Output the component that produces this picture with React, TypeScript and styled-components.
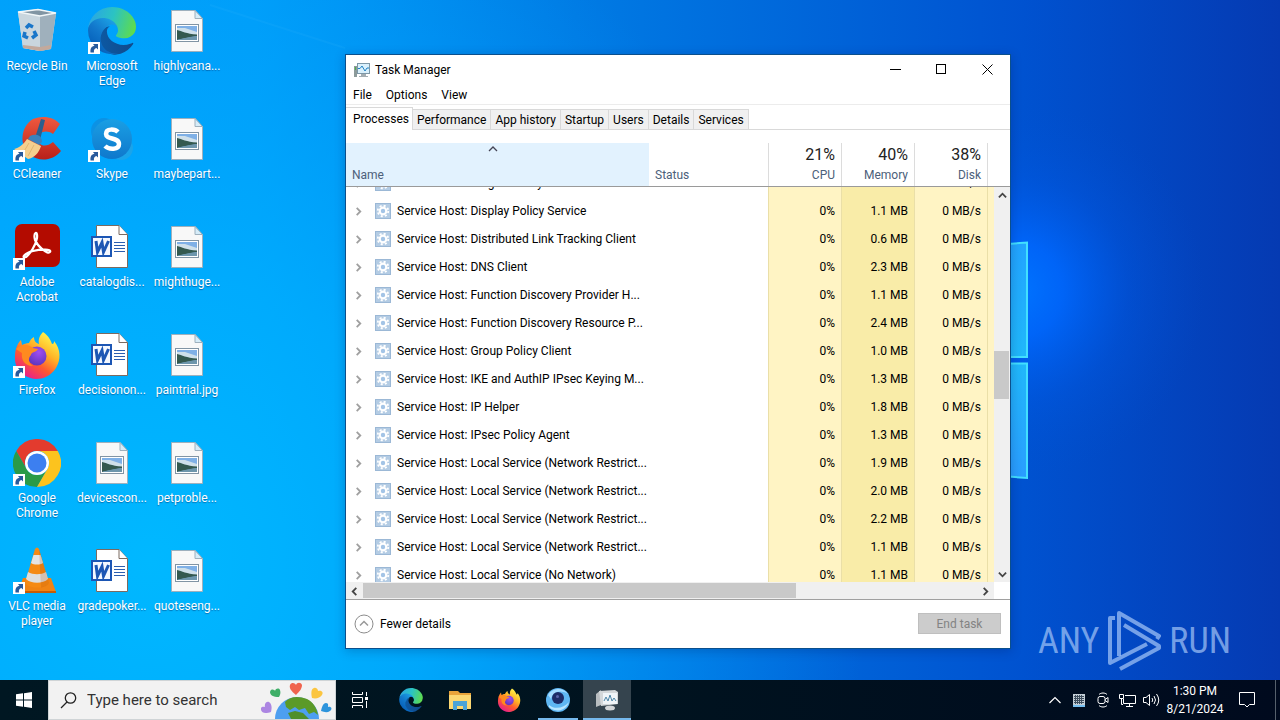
import React from 'react';
import styled, { createGlobalStyle, css } from 'styled-components';

const UI_FONT = "'Segoe UI', Roboto, 'Open Sans', sans-serif";

const GlobalStyle = createGlobalStyle`
  *, *::before, *::after { box-sizing: border-box; }
  body { margin: 0; font-family: ${UI_FONT}; font-size: 12px; }
  button, input { font: inherit; color: inherit; }
  button { margin: 0; padding: 0; border: 0; background: none; }
`;

/* ---------- Desktop ---------- */

const Screen = styled.div`
  display: flex;
  flex-direction: column;
  min-height: 100vh;
  background: #0078d7;
`;

const Desktop = styled.main`
  position: relative;
  flex: 1;
  overflow: hidden;
`;

const WallpaperSvg = styled.svg`
  position: absolute;
  inset: 0;
  width: 100%;
  height: 100%;
`;

const IconGrid = styled.div`
  position: relative;
  display: grid;
  grid-auto-flow: column;
  grid-template-rows: repeat(6, 108px);
  grid-auto-columns: 75px;
  justify-content: start;
  padding-top: 7px;
`;

const Shortcut = styled.button`
  display: flex;
  flex-direction: column;
  align-items: center;
  gap: 4px;
  padding-right: 1px;
  color: #fff;
  line-height: 15px;
  text-shadow: 0 1px 1px rgba(0, 50, 110, 0.5);
  svg { flex: none; }
  span { max-width: 72px; }
`;

/* ---------- Window ---------- */

const Window = styled.section`
  position: absolute;
  top: 54px;
  left: 345px;
  right: 269px;
  border: 1px solid #0b4f8c;
  background: #fff;
  color: #000;
  box-shadow: 0 2px 10px rgba(0, 20, 80, 0.25);
`;

const TitleBar = styled.header`
  display: flex;
  align-items: center;
  height: 30px;
  padding-left: 8px;
  h1 { flex: 1; margin: 0 0 0 5px; font-size: 12px; font-weight: 400; }
`;

const CaptionButton = styled.button`
  display: grid;
  place-items: center;
  width: 46px;
  height: 30px;
  padding-bottom: 1px;
`;

const MenuBar = styled.nav`
  display: flex;
  gap: 14px;
  height: 20px;
  padding: 0 7px;
  border-bottom: 1px solid #ececec;
  button { line-height: 20px; }
`;

const TabStrip = styled.div`
  display: flex;
  align-items: flex-end;
  height: 25px;
  border-bottom: 1px solid #d9d9d9;
`;

const Tab = styled.button<{ $selected?: boolean }>`
  height: 20px;
  padding: 1px 4px 0;
  border: 1px solid #d9d9d9;
  border-left-width: 0;
  border-bottom: 0;
  background: #f0f0f0;
  line-height: 18px;
  ${(p) => p.$selected && css`
    height: 23px;
    margin-bottom: -1px;
    padding: 0 3px 1px 7px;
    background: #fff;
    line-height: 20px;
  `}
`;

/* ---------- Process table ---------- */

const TableArea = styled.div`
  position: relative;
  padding-top: 13px;
`;

const ProcessTable = styled.table`
  display: block;
  thead { display: block; border-bottom: 1px solid #9a9a9a; }
  tbody { display: block; height: 395px; overflow: hidden; }
`;

const rowGrid = css`
  display: grid;
  grid-template-columns: 303px minmax(0, 1fr) 73px 73px 73px 23px;
`;

const HeadRow = styled.tr`
  ${rowGrid}
`;

const HeadCell = styled.th<{ $metric?: boolean; $sorted?: boolean }>`
  position: relative;
  display: flex;
  flex-direction: column;
  justify-content: flex-end;
  height: 43px;
  padding: 0 6px 3px;
  border-left: ${(p) => (p.$metric ? '1px solid #dcdcdc' : '0')};
  background: ${(p) => (p.$sorted ? '#e2f2fe' : '#fff')};
  color: #4c607a;
  font-weight: 400;
  line-height: 16px;
  text-align: ${(p) => (p.$metric ? 'right' : 'left')};
  strong {
    color: #222;
    font-size: 16px;
    font-weight: 400;
    line-height: 24px;
  }
`;

const SortMark = styled.svg`
  position: absolute;
  top: 3px;
  left: 50%;
  margin-left: -10px;
`;

const BodyRow = styled.tr<{ $scrolled?: boolean }>`
  ${rowGrid}
  height: 28px;
  margin-top: ${(p) => (p.$scrolled ? '-18px' : '0')};
  line-height: 28px;
`;

const NameCell = styled.td`
  display: flex;
  align-items: center;
  gap: 6px;
  padding: 0 8px;
  white-space: nowrap;
  > button { display: grid; place-items: center; width: 9px; height: 16px; margin-right: 6px; }
  > svg { flex: none; }
`;

const Cell = styled.td<{ $tone?: 'light' | 'deep' }>`
  padding: 0 6px;
  text-align: right;
  ${(p) => p.$tone && css`
    border-left: 1px solid #eadfa8;
    background: ${p.$tone === 'deep' ? '#f9eca8' : '#fff4c4'};
  `}
`;

const EndCell = styled(Cell)`
  margin-right: 16px;
`;

const VerticalBar = styled.div`
  position: absolute;
  right: 0;
  bottom: 0;
  display: flex;
  flex-direction: column;
  width: 16px;
  height: 395px;
  background: #f0f0f0;
`;

const HorizontalBar = styled.div`
  display: flex;
  height: 17px;
  margin-right: 16px;
  padding: 1px 0;
  background: #f0f0f0;
`;

const ScrollArrow = styled.button`
  display: grid;
  place-items: center;
  width: 17px;
  height: 16px;
  flex: none;
`;

const Thumb = styled.div<{ $grow: number }>`
  flex: ${(p) => p.$grow};
  margin-right: 1px;
  background: #c9c9c9;
`;

const Track = styled.div<{ $grow: number }>`
  flex: ${(p) => p.$grow};
`;

const Footer = styled.footer`
  display: flex;
  align-items: center;
  justify-content: space-between;
  height: 49px;
  padding: 0 9px 1px 8px;
  border-top: 1px solid #a0a0a0;
`;

const FewerDetails = styled.button`
  display: flex;
  align-items: center;
  gap: 6px;
`;

const EndTask = styled.button`
  width: 83px;
  height: 21px;
  border: 1px solid #bfbfbf;
  background: #ccc;
  color: #838383;
`;

/* ---------- Watermark ---------- */

const Watermark = styled.div`
  position: absolute;
  right: 49px;
  bottom: 8px;
  display: flex;
  align-items: center;
  gap: 8px;
  color: rgba(166, 199, 248, 0.7);
  font-family: 'Roboto Condensed', 'Liberation Sans Narrow', Roboto, sans-serif;
  font-size: 36px;
  line-height: 62px;
`;

/* ---------- Taskbar ---------- */

const Taskbar = styled.footer`
  position: relative;
  display: flex;
  height: 40px;
  background: linear-gradient(90deg, #001722, #00131f 50%, #000a1e);
  color: #fff;
`;

const TaskButton = styled.button<{ $running?: boolean; $active?: boolean }>`
  position: relative;
  display: grid;
  place-items: center;
  width: 48px;
  height: 40px;
  background: ${(p) => (p.$active ? '#35444e' : 'transparent')};
  ${(p) => (p.$running || p.$active) && css`
    &::after {
      content: '';
      position: absolute;
      bottom: 0;
      left: ${p.$active ? 0 : 4}px;
      right: ${p.$active ? 0 : 4}px;
      height: 2px;
      background: #76b9ed;
    }
  `}
`;

const SearchBox = styled.label`
  display: flex;
  align-items: center;
  gap: 10px;
  width: 288px;
  padding-left: 11px;
  border: 1px solid #cfd4d6;
  background: #f2f2f2;
  color: #222;
  svg { flex: none; }
  input {
    flex: 1;
    min-width: 0;
    padding: 0;
    border: 0;
    outline: 0;
    background: none;
    font-size: 15px;
  }
  input::placeholder { color: #333; opacity: 1; }
`;

const Pinned = styled.div`
  display: flex;
  gap: 1px;
  margin-left: 3px;
`;

const Tray = styled.div`
  display: flex;
  align-items: center;
  margin-left: auto;
`;

const TrayButton = styled.button`
  display: grid;
  place-items: center;
  width: 24px;
  height: 40px;
`;

const Clock = styled.time`
  width: 64px;
  line-height: 18px;
  text-align: center;
`;

const Notifications = styled(TrayButton)`
  width: 40px;
`;

const ShowDesktop = styled.button`
  width: 5px;
  height: 40px;
  margin-left: 8px;
  border-left: 1px solid #56606c;
`;

/* ---------- Drawings ---------- */

const Wallpaper = () => (
  <WallpaperSvg viewBox="0 0 1280 680" preserveAspectRatio="none" aria-hidden="true">
    <defs>
      <linearGradient id="sky" x1="0" y1="0" x2="1" y2="0">
        <stop offset="0" stopColor="#00a0fa" />
        <stop offset=".2" stopColor="#009cf8" />
        <stop offset=".45" stopColor="#007be4" />
        <stop offset=".8" stopColor="#0052d0" />
        <stop offset="1" stopColor="#053ab2" />
      </linearGradient>
      <radialGradient id="left" cx="150" cy="560" r="720" gradientUnits="userSpaceOnUse">
        <stop offset="0" stopColor="#00b8ff" />
        <stop offset=".4" stopColor="#00b0ff" stopOpacity=".75" />
        <stop offset="1" stopColor="#00a0ff" stopOpacity="0" />
      </radialGradient>
      <radialGradient id="glow" cx="1015" cy="290" r="190" gradientUnits="userSpaceOnUse">
        <stop offset="0" stopColor="#0074ff" />
        <stop offset=".25" stopColor="#0068ff" stopOpacity=".85" />
        <stop offset=".6" stopColor="#005cec" stopOpacity=".3" />
        <stop offset="1" stopColor="#0050d0" stopOpacity="0" />
      </radialGradient>
      <linearGradient id="pane" x1="0" y1="0" x2="0" y2="1">
        <stop offset="0" stopColor="#22a4ff" />
        <stop offset=".5" stopColor="#20b8fa" />
        <stop offset="1" stopColor="#2a9dff" />
      </linearGradient>
    </defs>
    <rect width="1280" height="680" fill="url(#sky)" />
    <rect width="1280" height="680" fill="url(#left)" />
    <path d="M210 5 L345 48" stroke="#4ac0ff" strokeWidth="2" opacity=".1" />
    <rect width="1280" height="680" fill="url(#glow)" />
    <path d="M900 252 L1027 242.500 V357 H900Z M900 363.500 H1027 V478 L900 468Z" fill="url(#pane)" stroke="#42e0ff" strokeWidth="2" />
  </WallpaperSvg>
);

const ShortcutArrow = () => (
  <g>
    <rect x="0" y="35" width="12" height="12" fill="#fff" />
    <path d="M2.500 45.500 C2 41 4 39 6.500 39 L5 37 H10 V42.500 L8.500 41 C6.500 41.500 5.500 43 6 45.500Z" fill="#285a9c" />
  </g>
);

const RecycleBin = () => (
  <svg width="48" height="48" viewBox="0 0 48 48">
    <path d="M5 5 L25 2 L43 6 L38 42 L27 44 L10 41Z" fill="#d4dde3" />
    <path d="M5 5 L27 9 L27 44 L10 41Z" fill="#c9d6de" />
    <path d="M27 9 L43 6 L38 42 L27 44Z" fill="#9fb0bc" />
    <path d="M5 5 L25 2.500 L43 6 L27 9Z" fill="#8195a3" stroke="#f1f6f8" strokeWidth="1.500" />
    <path d="M10 38 L27 40 L38 38 V42 L27 44 L10 41Z" fill="#c3a99c" />
    <g fill="none" stroke="#1976c9" strokeWidth="3.500">
      <path d="M13 21 L16 18 L20 20" />
      <path d="M21 24 L23 28 L19 31" />
      <path d="M15 31 L11 29 L12 25" />
    </g>
  </svg>
);

const EdgeArt = ({ id }: { id: string }) => (
  <>
    <defs>
      <linearGradient id={`${id}a`} x1="60" y1="177" x2="241" y2="177" gradientUnits="userSpaceOnUse">
        <stop offset="0" stopColor="#0c59a4" />
        <stop offset="1" stopColor="#114a8b" />
      </linearGradient>
      <linearGradient id={`${id}b`} x1="150" y1="100" x2="40" y2="225" gradientUnits="userSpaceOnUse">
        <stop offset="0" stopColor="#1b9de2" />
        <stop offset=".5" stopColor="#1278cc" />
        <stop offset="1" stopColor="#0661ba" />
      </linearGradient>
      <linearGradient id={`${id}c`} x1="20" y1="60" x2="245" y2="130" gradientUnits="userSpaceOnUse">
        <stop offset="0" stopColor="#2aa9e0" />
        <stop offset=".45" stopColor="#2bc3c3" />
        <stop offset="1" stopColor="#5fdc4c" />
      </linearGradient>
    </defs>
    <path fill={`url(#${id}a)`} d="M235.680 195.460a93.730 93.730 0 0 1-10.540 4.710 101.870 101.870 0 0 1-35.900 6.460c-47.320 0-88.540-32.550-88.540-74.320A31.480 31.480 0 0 1 117.130 105c-42.800 1.800-53.800 46.400-53.800 72.530 0 73.880 68.090 81.370 82.760 81.370 7.910 0 19.840-2.300 27-4.560l1.310-.44a128.340 128.340 0 0 0 66.600-52.800 4 4 0 0 0-5.320-5.640Z" />
    <path fill={`url(#${id}b)`} d="M105.730 241.420a79.200 79.200 0 0 1-22.740-21.340 80.720 80.720 0 0 1 29.530-120.300c3.120-1.470 8.450-4.130 15.540-4a32.350 32.350 0 0 1 25.690 13 31.880 31.880 0 0 1 6.360 18.660c0-.21 24.460-79.600-80-79.600-43.900 0-80 41.660-80 78.210a130.150 130.150 0 0 0 12.110 56 128 128 0 0 0 156.380 67.110 75.550 75.550 0 0 1-62.780-8Z" />
    <path fill={`url(#${id}c)`} d="M152.330 148.860c-.81 1.050-3.300 2.500-3.300 5.660 0 2.610 1.700 5.120 4.720 7.230 14.380 10 41.490 8.680 41.560 8.680a59.560 59.560 0 0 0 30.270-8.350A61.380 61.380 0 0 0 256 109.180c.26-22.410-8-37.310-11.340-43.910C223.460 23.840 177.720 0 128 0A128 128 0 0 0 0 126.200c.48-36.540 36.800-66.050 80-66.050 3.500 0 23.460.34 42 10.070 16.340 8.580 24.900 18.940 30.850 29.210 6.180 10.670 7.280 24.150 7.280 29.520s-2.740 13.330-7.800 19.910Z" />
  </>
);

const EdgeIcon = () => (
  <svg width="48" height="48" viewBox="0 0 48 48">
    <g transform="scale(.1875 .184)"><EdgeArt id="edge-desk" /></g>
    <ShortcutArrow />
  </svg>
);

const CCleaner = () => (
  <svg width="48" height="48" viewBox="0 0 48 48">
    <defs>
      <linearGradient id="cc" x1="0" y1="0" x2="0" y2="1">
        <stop offset="0" stopColor="#f0593f" />
        <stop offset="1" stopColor="#b8201a" />
      </linearGradient>
    </defs>
    <path d="M47 9 L40 19 C33 14 25 17 25 24 C25 31 33 33 40 27 L48 36 C40 46 26 47 17 40 C6 31 7 12 20 4 C30 0 41 2 47 9Z" fill="url(#cc)" />
    <path d="M28 4 L32 5 L27 25 L22 23Z" fill="#2b5f8e" />
    <path d="M17 21 C23 18 29 20 29 27 L26 30 L15 24Z" fill="#3a82bd" />
    <path d="M14 24 L28 31 C26 38 21 43 15 44 L1 34 C6 33 11 29 14 24Z" fill="#f4cf8e" />
    <path d="M16 28 L10 38 M21 30 L15 41" stroke="#e2b671" strokeWidth="1" />
    <ShortcutArrow />
  </svg>
);

const Skype = () => (
  <svg width="48" height="48" viewBox="0 0 48 48">
    <defs>
      <linearGradient id="sk" x1="0" y1="0" x2="0" y2="1">
        <stop offset="0" stopColor="#1a9fe4" />
        <stop offset="1" stopColor="#0f78cc" />
      </linearGradient>
    </defs>
    <circle cx="16" cy="16" r="13" fill="#0c92e4" />
    <circle cx="33" cy="33" r="12" fill="#1aa4ea" />
    <circle cx="24" cy="24" r="20" fill="url(#sk)" />
    <path d="M30 17 C27 14 18 13 18 19 C18 25 31 22 31 29 C31 35 21 35 17 31" fill="none" stroke="#fff" strokeWidth="4.500" />
    <ShortcutArrow />
  </svg>
);

const Acrobat = () => (
  <svg width="48" height="48" viewBox="0 0 48 48">
    <rect x="2" y="1" width="45" height="43" rx="7" fill="#b30b00" />
    <path d="M13 34 C8 36 11 30 20 28 C28 26 39 26 37 29 C35 32 25 24 22 17 C20 9 25 7 24 15 C23 22 17 31 13 34Z" fill="none" stroke="#fff" strokeWidth="2.200" />
    <ShortcutArrow />
  </svg>
);

const FirefoxArt = ({ id }: { id: string }) => (
  <>
    <defs>
      <linearGradient id={`${id}a`} x1=".8" y1=".1" x2=".25" y2=".95">
        <stop offset="0" stopColor="#fff04a" />
        <stop offset=".35" stopColor="#ffb326" />
        <stop offset=".65" stopColor="#ff5a2f" />
        <stop offset="1" stopColor="#e8208a" />
      </linearGradient>
      <radialGradient id={`${id}b`} cx=".6" cy=".3" r=".8">
        <stop offset="0" stopColor="#a24df0" />
        <stop offset="1" stopColor="#5433b8" />
      </radialGradient>
    </defs>
    <path d="M30 1 C36 5 38 10 39 13 C41 13 41 11 41 10 C48 18 48 29 43 37 C38 45 30 48 23 48 C10 47 1 38 2 25 C2 19 4 13 8 9 L9 14 C11 13 13 12 16 12 C17 9 19 7 21 6 C21 10 23 12 26 13 C25 8 27 4 30 1Z" fill={`url(#${id}a)`} />
    <circle cx="24" cy="25" r="9.500" fill={`url(#${id}b)`} />
    <path d="M3 18 C8 13 15 13 20 17 L25 18 C24 21 18 21 18 24 C15 27 15 32 20 35 C11 35 8 28 9 22Z" fill="#ff8a1f" />
  </>
);

const FirefoxIcon = () => (
  <svg width="48" height="48" viewBox="0 0 48 48">
    <FirefoxArt id="fx-desk" />
    <ShortcutArrow />
  </svg>
);

const ChromeIcon = () => (
  <svg width="48" height="48" viewBox="0 0 48 48">
    <path d="M3.200 12 A24 24 0 0 1 44.800 12 H24 A12 12 0 0 0 13.600 30Z" fill="#e33b2e" />
    <path d="M3.200 12 A24 24 0 0 0 24 48 L34.400 30 A12 12 0 0 1 13.600 30Z" fill="#2a9a47" />
    <path d="M44.800 12 A24 24 0 0 1 24 48 L34.400 30 A12 12 0 0 0 24 12Z" fill="#fcc31e" />
    <circle cx="24" cy="24" r="12" fill="#fff" />
    <circle cx="24" cy="24" r="9.500" fill="#3c7ff0" />
    <ShortcutArrow />
  </svg>
);

const VlcIcon = () => (
  <svg width="48" height="48" viewBox="0 0 48 48">
    <path d="M10 31 H38 L43 45 H5Z" fill="#f08313" />
    <path d="M5 44 H43 V46 H5Z" fill="#c55c05" />
    <path d="M22 2 Q24 -1 26 2 L36 36 C32 42 16 42 12 36Z" fill="#f58a14" />
    <path d="M20.500 8 H27.500 L30 16 C27 18 21 18 18 16Z" fill="#e4e4e4" />
    <path d="M15 25 C20 28 28 28 33 25 L35 32 C30 37 18 37 13 32Z" fill="#dedede" />
    <path d="M26 2 L36 36 C34 39 31 40 28 40.500Z" fill="#a84400" opacity=".2" />
    <ShortcutArrow />
  </svg>
);

const ImageFile = () => (
  <svg width="48" height="48" viewBox="0 0 48 48">
    <path d="M8.500 3.500 H32 L39.500 11.500 V44.500 H8.500Z" fill="#f8f8f8" stroke="#9eb0bd" />
    <path d="M32 3.500 V11.500 H39.500Z" fill="#d6ecf8" stroke="#9eb0bd" />
    <rect x="12.500" y="17.500" width="23" height="17" fill="#fff" stroke="#8194a4" />
    <rect x="14" y="19" width="20" height="14" fill="#7fb0e6" />
    <path d="M14 21 H22 L34 25 V28 H14Z" fill="#cfe0ea" />
    <path d="M14 23 C19 24 23 27 34 27.500 V29 C26 30 20 32 14 33Z" fill="#34594f" />
    <path d="M34 29 C26 30 20 31 14 33 H34Z" fill="#6d96ac" />
  </svg>
);

const WordFile = () => (
  <svg width="48" height="48" viewBox="0 0 48 48">
    <path d="M8.500 2.500 H31 L39.500 11.500 V44.500 H8.500Z" fill="#fff" stroke="#7b6a60" />
    <path d="M31 2.500 V11.500 H39.500" fill="#fff" stroke="#7b6a60" />
    <path d="M26 19.500 H37 M26 22.500 H37 M26 25.500 H37 M26 28.500 H37" stroke="#2b5eb0" />
    <rect x="3" y="13" width="21" height="21" fill="#1c56b4" />
    <rect x="5" y="15" width="17" height="17" fill="#f4f8ff" />
    <path d="M8 18 L9.500 29 L14 19.500 L15.500 29 L20.500 18" fill="none" stroke="#1c56b4" strokeWidth="3" />
  </svg>
);

const GearTile = () => (
  <svg width="16" height="16" viewBox="0 0 16 16">
    <rect width="16" height="16" fill="#b4cce4" />
    <rect x=".5" y=".5" width="15" height="15" fill="none" stroke="#9bb8d6" />
    <circle cx="8" cy="8" r="5.300" fill="none" stroke="#fff" strokeWidth="1.800" strokeDasharray="2.080 2.080" />
    <circle cx="8" cy="8" r="3.300" fill="#a3c4e6" stroke="#fff" strokeWidth="2.200" />
  </svg>
);

const TaskManagerSmall = () => (
  <svg width="16" height="16" viewBox="0 0 16 16">
    <rect x="0" y="4" width="3" height="11" fill="#8c9a9a" />
    <rect x="1" y="5" width="1" height="3" fill="#4fb04a" />
    <rect x="3.500" y="1.500" width="12" height="10" fill="#d9f0fc" stroke="#7d98a8" />
    <path d="M4 6.500 L6 6.500 L8 4 L11 9 L13 6 H15" fill="none" stroke="#2082c4" />
    <path d="M7 12 H12 V14 H14 V15 H5 V14 H7Z" fill="#a3adb2" />
  </svg>
);

type Dir = 'up' | 'down' | 'left' | 'right';
const paths: Record<Dir, string> = {
  up: 'M1 7 L5 3 L9 7',
  down: 'M1 3 L5 7 L9 3',
  left: 'M7 1 L3 5 L7 9',
  right: 'M3 1 L7 5 L3 9',
};
const Chevron = ({ dir, color = '#444', width = 2 }: { dir: Dir; color?: string; width?: number }) => (
  <svg width="9" height="9" viewBox="0 0 10 10">
    <path d={paths[dir]} fill="none" stroke={color} strokeWidth={width} />
  </svg>
);

const PlayMark = () => (
  <svg width="54" height="62" viewBox="0 0 54 62" fill="none" stroke="currentColor" strokeWidth="4" strokeLinejoin="round">
    <path d="M8 8 H3 V53 L40 34" />
    <path d="M12 46 V3 L52 26 L50 29" />
    <path d="M17 15 L52 36 V38 L13 59" />
  </svg>
);

const EarthArt = () => (
  <svg width="74" height="38" viewBox="0 0 74 38">
    <circle cx="36" cy="38" r="22" fill="#4d9ff0" />
    <path d="M24 21 C29 15 38 15 46 18 C52 21 56 27 57 34 L53 31 L48 33 L44 27 L38 29 L34 26 L29 29 L25 26Z" fill="#5b9a28" />
    <path d="M27 32 L34 30 L42 32 L48 38 H30Z" fill="#4f8f2a" />
    <path d="M35 14 C30 10 28 7 29 4 C31 0 35 3 35 4 C36 1 40 1 41 4 C41 8 38 11 35 14Z" fill="#f0644e" />
    <path d="M18 16 C12 16 9 14 9 11 C10 7 14 9 14 10 C15 7 18 7 19 9 C20 12 19 14 18 16Z" fill="#3fae68" />
    <path d="M51 17 C50 12 50 8 53 7 C56 6 57 9 57 10 C60 9 63 11 61 14 C59 17 55 18 51 17Z" fill="#fbc540" />
    <path d="M10 31 C4 33 1 32 0 29 C-1 26 2 25 4 26 C3 22 6 20 8 21 C11 23 11 27 10 31Z" fill="#ac86e2" />
    <path d="M60 30 C61 26 62 22 65 22 C68 22 67 25 67 26 C70 25 72 28 69 30 C66 32 63 31 60 30Z" fill="#2d94dc" />
  </svg>
);

/* ---------- Content ---------- */

const desktopItems: [string, React.FC][] = [
  ['Recycle Bin', RecycleBin],
  ['CCleaner', CCleaner],
  ['Adobe Acrobat', Acrobat],
  ['Firefox', FirefoxIcon],
  ['Google Chrome', ChromeIcon],
  ['VLC media player', VlcIcon],
  ['Microsoft Edge', EdgeIcon],
  ['Skype', Skype],
  ['catalogdis...', WordFile],
  ['decisionon...', WordFile],
  ['devicescon...', ImageFile],
  ['gradepoker...', WordFile],
  ['highlycana...', ImageFile],
  ['maybepart...', ImageFile],
  ['mighthuge...', ImageFile],
  ['paintrial.jpg', ImageFile],
  ['petproble...', ImageFile],
  ['quoteseng...', ImageFile],
];

const tabs = ['Processes', 'Performance', 'App history', 'Startup', 'Users', 'Details', 'Services'];

const metrics = [
  ['21%', 'CPU'],
  ['40%', 'Memory'],
  ['38%', 'Disk'],
];

const processes = [
  ['Diagnostic System Host', '1.2'],
  ['Display Policy Service', '1.1'],
  ['Distributed Link Tracking Client', '0.6'],
  ['DNS Client', '2.3'],
  ['Function Discovery Provider H...', '1.1'],
  ['Function Discovery Resource P...', '2.4'],
  ['Group Policy Client', '1.0'],
  ['IKE and AuthIP IPsec Keying M...', '1.3'],
  ['IP Helper', '1.8'],
  ['IPsec Policy Agent', '1.3'],
  ['Local Service (Network Restrict...', '1.9'],
  ['Local Service (Network Restrict...', '2.0'],
  ['Local Service (Network Restrict...', '2.2'],
  ['Local Service (Network Restrict...', '1.1'],
  ['Local Service (No Network)', '1.1'],
];

const TaskManager = () => (
  <Window aria-label="Task Manager">
    <TitleBar>
      <TaskManagerSmall />
      <h1>Task Manager</h1>
      <CaptionButton aria-label="Minimize">
        <svg width="11" height="11" viewBox="0 0 11 11"><path d="M0 5.500 H11" stroke="#000" /></svg>
      </CaptionButton>
      <CaptionButton aria-label="Maximize">
        <svg width="11" height="11" viewBox="0 0 11 11"><rect x=".5" y=".5" width="9" height="9" fill="none" stroke="#000" /></svg>
      </CaptionButton>
      <CaptionButton aria-label="Close">
        <svg width="11" height="11" viewBox="0 0 11 11"><path d="M.5 .5 L10.500 10.500 M10.500 .5 L.5 10.500" stroke="#000" /></svg>
      </CaptionButton>
    </TitleBar>
    <MenuBar>
      <button>File</button>
      <button>Options</button>
      <button>View</button>
    </MenuBar>
    <TabStrip role="tablist">
      {tabs.map((t, i) => (
        <Tab key={t} role="tab" aria-selected={i === 0} $selected={i === 0}>{t}</Tab>
      ))}
    </TabStrip>
    <TableArea>
      <ProcessTable>
        <thead>
          <HeadRow>
            <HeadCell $sorted>
              <SortMark width="10" height="6" viewBox="0 0 10 6">
                <path d="M1 5 L5 1 L9 5" fill="none" stroke="#445" strokeWidth="1.300" />
              </SortMark>
              Name
            </HeadCell>
            <HeadCell>Status</HeadCell>
            {metrics.map(([value, label]) => (
              <HeadCell key={label} $metric>
                <strong>{value}</strong>
                {label}
              </HeadCell>
            ))}
            <HeadCell as="td" $metric />
          </HeadRow>
        </thead>
        <tbody>
          {processes.map(([name, memory], i) => (
            <BodyRow key={i} $scrolled={i === 0}>
              <NameCell>
                <button aria-label="Expand"><Chevron dir="right" color="#a0a0a0" /></button>
                <GearTile />
                Service Host: {name}
              </NameCell>
              <Cell />
              <Cell $tone="light">0%</Cell>
              <Cell $tone="deep">{memory} MB</Cell>
              <Cell $tone="light">0 MB/s</Cell>
              <EndCell $tone="light" />
            </BodyRow>
          ))}
        </tbody>
      </ProcessTable>
      <VerticalBar>
        <ScrollArrow aria-label="Scroll up"><Chevron dir="up" /></ScrollArrow>
        <Track $grow={148} />
        <Thumb $grow={48} />
        <Track $grow={167} />
        <ScrollArrow aria-label="Scroll down"><Chevron dir="down" /></ScrollArrow>
      </VerticalBar>
    </TableArea>
    <HorizontalBar>
      <ScrollArrow aria-label="Scroll left"><Chevron dir="left" /></ScrollArrow>
      <Thumb $grow={433} />
      <Track $grow={180} />
      <ScrollArrow aria-label="Scroll right"><Chevron dir="right" /></ScrollArrow>
    </HorizontalBar>
    <Footer>
      <FewerDetails>
        <svg width="20" height="20" viewBox="0 0 20 20" fill="none">
          <circle cx="10" cy="10" r="9" stroke="#8c8c8c" />
          <path d="M6 11.500 L10 7.500 L14 11.500" stroke="#999" strokeWidth="1.500" />
        </svg>
        Fewer details
      </FewerDetails>
      <EndTask disabled>End task</EndTask>
    </Footer>
  </Window>
);

export default function App() {
  return (
    <Screen>
      <GlobalStyle />
      <Desktop>
        <Wallpaper />
        <IconGrid>
          {desktopItems.map(([label, Icon]) => (
            <Shortcut key={label}>
              <Icon />
              <span>{label}</span>
            </Shortcut>
          ))}
        </IconGrid>
        <Watermark>
          <span>ANY</span>
          <PlayMark />
          <span>RUN</span>
        </Watermark>
        <TaskManager />
      </Desktop>
      <Taskbar>
        <TaskButton aria-label="Start">
          <svg width="16" height="16" viewBox="0 0 16 16" fill="#fff">
            <path d="M0 2.300 L7 1.300 V7.500 H0Z M8 1.200 L16 0 V7.500 H8Z M0 8.500 H7 V14.700 L0 13.700Z M8 8.500 H16 V16 L8 14.800Z" />
          </svg>
        </TaskButton>
        <SearchBox>
          <svg width="17" height="17" viewBox="0 0 17 17" fill="none" stroke="#222" strokeWidth="1.300">
            <circle cx="10.500" cy="6" r="5.200" />
            <path d="M7 10 L1 16" />
          </svg>
          <input type="text" placeholder="Type here to search" aria-label="Type here to search" />
          <EarthArt />
        </SearchBox>
        <TaskButton aria-label="Task View">
          <svg width="17" height="16" viewBox="0 0 17 16" fill="none" stroke="#fff">
            <path d="M.5 0 V2.500 H10.500 V0 M.5 16 V13.500 H10.500 V16 M.5 5.500 H10.500 V10.500 H.5Z M14.500 0 V4 M14.500 9 V16" />
            <rect x="13.500" y="5.500" width="2" height="2" fill="#fff" />
          </svg>
        </TaskButton>
        <Pinned>
          <TaskButton aria-label="Microsoft Edge">
            <svg width="24" height="24" viewBox="0 0 256 260"><EdgeArt id="edge-bar" /></svg>
          </TaskButton>
          <TaskButton aria-label="File Explorer">
            <svg width="22" height="20" viewBox="0 0 22 20">
              <path d="M0 1 H9 L11 3 H22 V19 H0Z" fill="#e8a33a" />
              <path d="M0 5 H22 V19 H0Z" fill="#fbd772" />
              <path d="M4 11 H18 V20 H14 V16 H8 V20 H4Z" fill="#4aa3d8" />
            </svg>
          </TaskButton>
          <TaskButton aria-label="Firefox">
            <svg width="24" height="24" viewBox="0 0 48 48"><FirefoxArt id="fx-bar" /></svg>
          </TaskButton>
          <TaskButton aria-label="Browser" $running>
            <svg width="24" height="24" viewBox="0 0 24 24">
              <circle cx="12" cy="12" r="12" fill="#5fb7f3" />
              <path d="M2 7 A12 12 0 0 1 22 6 C14 1 7 4 5 11Z" fill="#a5dcff" />
              <path d="M3 17 C9 22 18 20 23 14 A12 12 0 0 1 3 19Z" fill="#b8e6ff" />
              <circle cx="12" cy="10" r="6" fill="#1d2b66" />
              <circle cx="11.500" cy="8.500" r="1.500" fill="#5a63a8" />
            </svg>
          </TaskButton>
          <TaskButton aria-label="Task Manager" $active>
            <svg width="24" height="24" viewBox="0 0 24 24">
              <path d="M1 6 L6 2 V17 L1 19Z" fill="#b8bdc0" />
              <path d="M4 3 L20 2 L23 4 V16 L6 18Z" fill="#d4d8da" />
              <rect x="8" y="5" width="14" height="11" fill="#f0f5f8" />
              <path d="M9 13 L11 9 L13 13 L15 7 L17 13 L19 10 L21 13" fill="none" stroke="#4f87a8" />
              <ellipse cx="15" cy="20" rx="5" ry="2.500" fill="#d3d6d8" />
            </svg>
          </TaskButton>
        </Pinned>
        <Tray>
          <TrayButton aria-label="Show hidden icons">
            <svg width="12" height="8" viewBox="0 0 12 8"><path d="M.5 7 L6 1.500 L11.500 7" fill="none" stroke="#fff" strokeWidth="1.200" /></svg>
          </TrayButton>
          <TrayButton aria-label="Touch keyboard">
            <svg width="12" height="13" viewBox="0 0 12 13">
              <rect width="12" height="13" fill="#c3ced6" />
              <path d="M1 2.500 H11 M1 4.500 H11 M1 6.500 H11 M1 8.500 H11 M2.500 1 V10 M4.500 1 V10 M6.500 1 V10 M8.500 1 V10" stroke="#3d4d5c" />
              <rect y="11" width="12" height="2" fill="#75bff0" />
            </svg>
          </TrayButton>
          <TrayButton aria-label="Meet Now">
            <svg width="12" height="16" viewBox="0 0 12 16" fill="none" stroke="#fff">
              <path d="M2 2.500 C4 .5 8 .5 10 2.500 M2 13.500 C4 15.500 8 15.500 10 13.500" />
              <rect x="1" y="4.500" width="7" height="7" rx="2" />
              <path d="M8 7.500 L11 5.500 V10.500 L8 8.500" />
            </svg>
          </TrayButton>
          <TrayButton aria-label="Network">
            <svg width="17" height="15" viewBox="0 0 17 15" fill="none" stroke="#fff">
              <path d="M6 2.500 H16.500 V10.500 H4.500 V6 M10.500 11 V13.500 M7 13.500 H14 M.5 1.500 H4.500 V5.500 H.5Z M2.500 6 V11.500 H4" />
            </svg>
          </TrayButton>
          <TrayButton aria-label="Volume">
            <svg width="17" height="14" viewBox="0 0 17 14" fill="none" stroke="#fff">
              <path d="M.5 4.500 H3 L6.500 1.500 V12.500 L3 9.500 H.5Z M9 5 Q10.500 7 9 9 M11 3 Q14 7 11 11 M13.500 1 Q18 7 13.500 13" />
            </svg>
          </TrayButton>
          <Clock>1:30 PM<br />8/21/2024</Clock>
          <Notifications aria-label="Notifications">
            <svg width="17" height="16" viewBox="0 0 17 16" fill="none" stroke="#fff">
              <path d="M.5 .5 H15.500 V12.500 H10.500 L8 15 L5.500 12.500 H.5Z" />
            </svg>
          </Notifications>
          <ShowDesktop aria-label="Show desktop" />
        </Tray>
      </Taskbar>
    </Screen>
  );
}
